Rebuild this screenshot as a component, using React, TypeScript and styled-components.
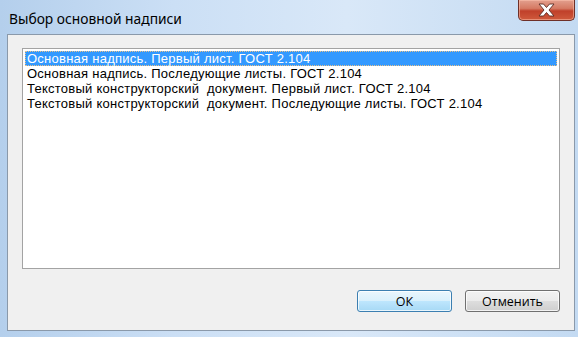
import React, { useState } from "react";
import styled, { createGlobalStyle } from "styled-components";

const GlobalStyle = createGlobalStyle`
  html, body {
    margin: 0;
    padding: 0;
    background: #c9def3;
  }
  body {
    font-family: "Open Sans", "Noto Sans", sans-serif;
  }
`;

const Window = styled.div`
  width: 578px;
  height: 337px;
  box-sizing: border-box;
  display: flex;
  flex-direction: column;
  padding: 0 3px 6px 7px;
  background: linear-gradient(90deg, #b4cfec 0%, #cbdff5 30%, #d9e8f8 60%, #c3daf2 100%);
  overflow: hidden;
`;

const TitleBar = styled.div`
  height: 34px;
  flex: none;
  display: flex;
  align-items: flex-start;
  justify-content: space-between;
`;

const Title = styled.div`
  margin: 9px 0 0 2px;
  font-family: "Noto Sans", "Open Sans", sans-serif;
  font-size: 13.8px;
  color: #000;
`;

const CloseButton = styled.button`
  width: 57px;
  height: 21px;
  padding: 0;
  border: 1px solid #6e3028;
  border-top: none;
  border-radius: 0 0 5px 5px;
  background: linear-gradient(180deg, #e3a08e 0%, #d57a63 42%, #c0402a 55%, #cf5a3c 100%);
  box-shadow: inset 0 0 0 1px rgba(255, 200, 180, 0.5);
  display: flex;
  align-items: center;
  justify-content: center;
`;

const Client = styled.div`
  flex: 1;
  display: flex;
  flex-direction: column;
  background: #f0f0f0;
  border: 1px solid #8a99aa;
  padding: 13px 14px 18px 14px;
`;

const ListBox = styled.div`
  flex: 1;
  background: #fff;
  border: 1px solid #a3a3a3;
  padding: 2px;
`;

const Row = styled.div<{ $selected?: boolean }>`
  height: 15px;
  line-height: 13px;
  padding-left: 1px;
  box-sizing: border-box;
  font-family: "Liberation Sans", Arial, sans-serif;
  font-size: 13px;
  letter-spacing: 0.25px;
  white-space: pre;
  color: ${(p) => (p.$selected ? "#fff" : "#000")};
  background: ${(p) => (p.$selected ? "#3399ff" : "transparent")};
  border: 1px dotted ${(p) => (p.$selected ? "#e8c088" : "transparent")};
`;

const Footer = styled.div`
  display: flex;
  justify-content: flex-end;
  gap: 13px;
  margin-top: 21px;
`;

const Button = styled.button<{ $default?: boolean }>`
  width: 95px;
  height: 22px;
  padding: 0;
  font-family: "Open Sans", "Noto Sans", sans-serif;
  font-size: 12.5px;
  color: #000;
  border-radius: 3px;
  border: 1px solid ${(p) => (p.$default ? "#3c7fb1" : "#707070")};
  background: ${(p) =>
    p.$default
      ? "linear-gradient(180deg, #eaf6fd 0%, #d9f0fc 50%, #bee6fd 51%, #a7d9f5 100%)"
      : "linear-gradient(180deg, #f2f2f2 0%, #ebebeb 50%, #dddddd 51%, #cfcfcf 100%)"};
  box-shadow: inset 0 0 0 1px rgba(255, 255, 255, 0.75);
`;

const items = [
  "Основная надпись. Первый лист. ГОСТ 2.104",
  "Основная надпись. Последующие листы. ГОСТ 2.104",
  "Текстовый конструкторский  документ. Первый лист. ГОСТ 2.104",
  "Текстовый конструкторский  документ. Последующие листы. ГОСТ 2.104",
];

export default function App() {
  const [selected, setSelected] = useState(0);

  return (
    <>
      <GlobalStyle />
      <Window>
        <TitleBar>
          <Title>Выбор основной надписи</Title>
          <CloseButton aria-label="Закрыть">
            <svg width="17" height="14" viewBox="0 0 17 14">
              <path
                d="M1 1 H5.5 L8.5 4.5 L11.5 1 H16 L11 7 L16 13 H11.5 L8.5 9.5 L5.5 13 H1 L6 7 Z"
                fill="#fff"
                stroke="#5a2a22"
                strokeWidth="0.9"
                strokeLinejoin="round"
              />
            </svg>
          </CloseButton>
        </TitleBar>
        <Client>
          <ListBox>
            {items.map((text, i) => (
              <Row key={i} $selected={selected === i} onClick={() => setSelected(i)}>
                {text}
              </Row>
            ))}
          </ListBox>
          <Footer>
            <Button $default>ОК</Button>
            <Button>Отменить</Button>
          </Footer>
        </Client>
      </Window>
    </>
  );
}
